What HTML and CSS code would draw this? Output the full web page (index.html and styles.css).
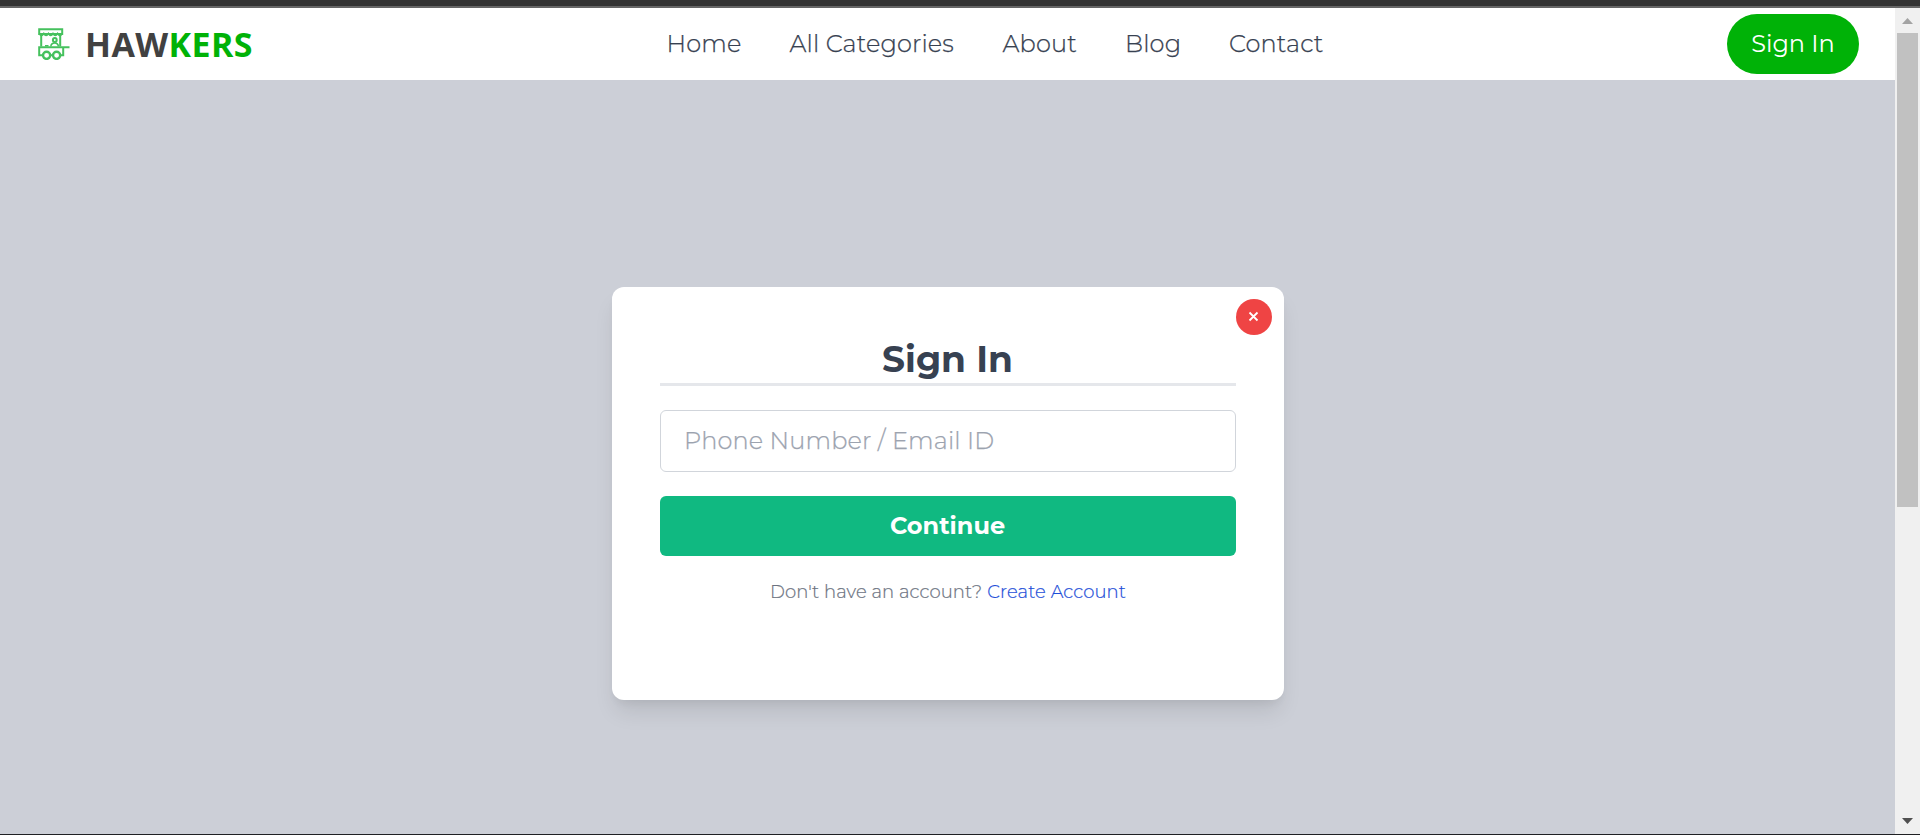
FILE: index.html
```
<!DOCTYPE html>
<html lang="en">
<head>
<meta charset="utf-8">
<title>Hawkers</title>
<link rel="stylesheet" href="styles.css">
</head>
<body>
<div class="topbar"></div>
<div class="viewport">
  <div class="page">
    <header class="header">
      <a class="logo">
        <svg class="logo-icon" viewBox="0 0 32 32" fill="none" stroke="#45c15d" stroke-width="2">
          <path d="M1.2 1.2H24.2V6H1.2Z"/>
          <path d="M1.2 5.5Q3.5 9.5 5.8 5.5Q8.1 9.5 10.4 5.5Q12.7 9.5 15 5.5Q17.3 9.5 19.6 5.5Q21.9 9.5 24.2 5.5" stroke-width="1.6"/>
          <path d="M3.2 7V18.5M22.2 7V18.5"/>
          <circle cx="16.8" cy="12" r="1.9"/>
          <path d="M12.8 18.5Q13.2 15 16.8 15Q20 15 20.4 18.5M7 17.8H10.5" stroke-width="1.6"/>
          <path d="M31.5 19.2H1.2V27.2H4.5M25.2 19.2V27.2H22.6"/>
          <circle cx="8.6" cy="27.3" r="3.6" stroke-width="2.4"/>
          <circle cx="18.6" cy="27.3" r="3.6" stroke-width="2.4"/>
          <path d="M12.4 27.2H14.8"/>
        </svg>
        <span class="logo-text">HAW<span class="logo-accent">KERS</span></span>
      </a>
      <nav class="nav">
        <a>Home</a>
        <a>All Categories</a>
        <a>About</a>
        <a>Blog</a>
        <a>Contact</a>
      </nav>
      <button class="signin">Sign In</button>
    </header>
    <main class="main">
      <section class="card">
        <button class="close" aria-label="Close">
          <svg viewBox="0 0 12 12" class="close-icon"><path d="M1.5 1.5L9.5 9.5M9.5 1.5L1.5 9.5" stroke="#fff" stroke-width="1.8"/></svg>
        </button>
        <h1 class="title">Sign In</h1>
        <div class="field">Phone Number / Email ID</div>
        <button class="continue">Continue</button>
        <p class="hint"><span>Don't have an account?</span><a class="create">Create Account</a></p>
      </section>
    </main>
  </div>
  <div class="scrollbar">
    <svg class="arrow" viewBox="0 0 11 6"><path d="M0 6L5.5 0L11 6Z" fill="#a3a3a3"/></svg>
    <div class="thumb"></div>
    <svg class="arrow arrow-down" viewBox="0 0 11 6"><path d="M0 0L5.5 6L11 0Z" fill="#505050"/></svg>
  </div>
</div>
</body>
</html>
```
FILE: styles.css
```
* { box-sizing: border-box; }
body {
  margin: 0;
  height: 835px;
  overflow: hidden;
  display: flex;
  flex-direction: column;
  font-family: Montserrat, Inter, sans-serif;
  font-weight: 300;
  border-bottom: 1px solid #1f2023;
}
button { font: inherit; border: 0; padding: 0; }
.topbar { height: 8px; background: #333; border-bottom: 2px solid #666; flex: none; }
.viewport { flex: 1; display: flex; }
.page { flex: 1; display: flex; flex-direction: column; }
.header {
  height: 72px;
  display: flex;
  align-items: center;
  background: #fff;
  padding: 0 36px 0 38px;
}
.logo { display: flex; align-items: center; gap: 15px; width: 628.5px; }
.logo-icon { width: 32px; height: 32px; }
.logo-text {
  font: 700 34px/40px "Open Sans", sans-serif;
  letter-spacing: .4px;
  color: #414141;
}
.logo-accent { color: #00b207; }
.nav {
  display: grid;
  grid-template-columns: 75px 165px 74.5px 56px 96px;
  gap: 48px;
  font-size: 24px;
  line-height: 36px;
  letter-spacing: .15px;
  color: #374151;
  -webkit-text-stroke: .25px currentColor;
  white-space: nowrap;
}
.signin {
  margin-left: auto;
  width: 132px;
  height: 60px;
  padding-bottom: 2px;
  border-radius: 30px;
  background: #00b207;
  color: #fff;
  font-size: 24px;
  font-weight: 400;
}
.main {
  flex: 1;
  background: #cccfd7;
  display: flex;
  justify-content: center;
  align-items: flex-start;
  padding-top: 207px;
}
.card {
  position: relative;
  width: 672px;
  height: 413px;
  margin-left: 1px;
  padding: 48px;
  border-radius: 12px;
  background: #fff;
  box-shadow: 0 15px 22.5px -4.5px rgba(0,0,0,.1), 0 6px 9px -3px rgba(0,0,0,.05);
}
.close {
  position: absolute;
  top: 12px;
  right: 12px;
  width: 36px;
  height: 36px;
  border-radius: 50%;
  background: #ef4444;
  display: grid;
  place-items: center;
}
.close-icon { width: 12px; height: 12px; }
.title {
  margin: 0 0 24px;
  height: 51px;
  padding-right: 1px;
  border-bottom: 3px solid #e5e7eb;
  text-align: center;
  font-size: 36px;
  line-height: 48px;
  font-weight: 700;
  color: #374151;
}
.field {
  height: 62px;
  border: 1px solid #d1d5db;
  border-radius: 6px;
  padding: 0 23px;
  font-size: 24px;
  line-height: 60px;
  letter-spacing: .13px;
  color: #9ca3af;
  -webkit-text-stroke: .25px currentColor;
}
.continue {
  display: block;
  width: 100%;
  height: 60px;
  margin-top: 24px;
  padding: 0 1px 2px 0;
  border-radius: 6px;
  background: #10b981;
  color: #fff;
  font-size: 24px;
  font-weight: 700;
}
.hint {
  margin: 22px 0 0;
  display: flex;
  justify-content: center;
  gap: 5px;
  font-size: 18px;
  line-height: 28px;
  letter-spacing: .1px;
  color: #6b7280;
  -webkit-text-stroke: .2px currentColor;
}
.create { color: #1d4ed8; }
.scrollbar {
  width: 25px;
  background: #f0f0f0;
  display: flex;
  flex-direction: column;
  align-items: center;
  padding: 10px 0;
}
.arrow { width: 11px; height: 6px; }
.thumb { width: 21px; height: 474px; margin-top: 9px; background: #c1c1c1; }
.arrow-down { margin-top: auto; }
```
